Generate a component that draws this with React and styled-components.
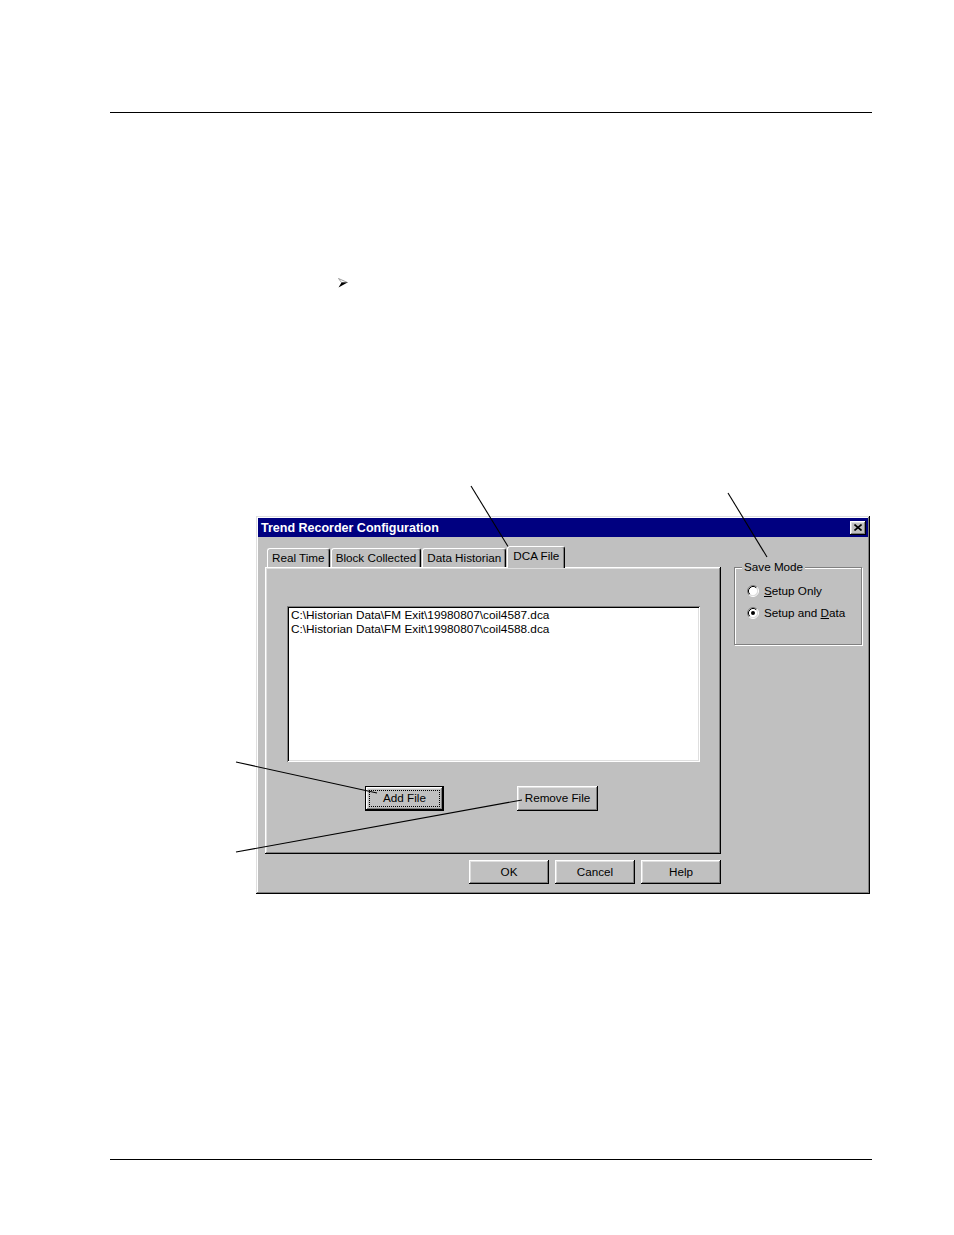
import React from 'react'
import styled, { createGlobalStyle, css } from 'styled-components'

const GlobalStyle = createGlobalStyle`
  html, body {
    margin: 0;
    padding: 0;
    background: #fff;
  }
  body {
    font-family: "Liberation Sans", Arial, sans-serif;
  }
`

const raised = css`
  box-shadow: inset -1px -1px #000, inset 1px 1px #fff, inset -2px -2px #808080,
    inset 2px 2px #dfdfdf;
`

const sunken = css`
  box-shadow: inset 1px 1px #808080, inset -1px -1px #fff, inset 2px 2px #000,
    inset -2px -2px #dfdfdf;
`

const Page = styled.div`
  position: relative;
  width: 954px;
  height: 1235px;
  overflow: hidden;
  background: #fff;
`

const Rule = styled.hr`
  margin: ${({ $top }) => $top}px 0 0 110px;
  width: 762px;
  height: 1px;
  border: 0;
  background: #000;
`

const Bullet = styled.svg`
  display: block;
  margin: 165px 0 0 338px;
`

const Window = styled.div`
  width: 614px;
  box-sizing: border-box;
  margin: 228px 0 0 256px;
  padding: 2px;
  background: #c0c0c0;
  color: #000;
  font-size: 11.7px;
  box-shadow: inset -1px -1px #000, inset 1px 1px #dfdfdf, inset -2px -2px #808080,
    inset 2px 2px #fff;
`

const TitleBar = styled.div`
  height: 19px;
  display: flex;
  align-items: center;
  justify-content: space-between;
  padding: 0 2px 0 3px;
  background: #000080;
  color: #fff;
  font-size: 12.5px;
  font-weight: bold;
`

const CloseButton = styled.button`
  width: 16px;
  height: 14px;
  padding: 0;
  border: 0;
  display: grid;
  place-items: center;
  background: #c0c0c0;
  ${raised}
`

const Body = styled.div`
  display: flex;
  gap: 13px;
  padding: 9px 0 8px 7px;
`

const LeftColumn = styled.div`
  width: 456px;
  display: flex;
  flex-direction: column;
`

const TabRow = styled.div`
  height: 21px;
  display: flex;
  align-items: flex-end;
  gap: 1px;
  padding-left: 2px;
`

const Tab = styled.div`
  position: relative;
  box-sizing: border-box;
  height: ${({ $active }) => ($active ? 22 : 19)}px;
  margin-bottom: ${({ $active }) => ($active ? -1 : 0)}px;
  z-index: ${({ $active }) => ($active ? 1 : 0)};
  display: flex;
  align-items: center;
  padding: 0 ${({ $active }) => ($active ? 5 : 4)}px
    ${({ $active }) => ($active ? 4 : 1)}px;
  background: #c0c0c0;
  border-top: 1px solid #fff;
  border-left: 1px solid #fff;
  border-right: 1px solid #000;
  border-radius: 3px 3px 0 0;
  box-shadow: inset -1px 0 #808080;
  white-space: nowrap;
`

const Panel = styled.div`
  height: 287px;
  box-sizing: border-box;
  display: flex;
  flex-direction: column;
  padding: 39px 0 0 22px;
  ${raised}
`

const FileList = styled.div`
  width: 413px;
  height: 156px;
  box-sizing: border-box;
  padding: 2px 4px;
  background: #fff;
  font-size: 11.8px;
  ${sunken}
`

const FileItem = styled.div`
  line-height: 14px;
  white-space: nowrap;
`

const PanelButtons = styled.div`
  display: flex;
  gap: 73px;
  margin-top: 24px;
  padding-left: 78px;
`

const Button = styled.button`
  width: ${({ $w }) => $w}px;
  height: ${({ $h }) => $h}px;
  box-sizing: border-box;
  display: flex;
  align-items: stretch;
  padding: ${({ $default }) => ($default ? '3px' : '0')};
  border: ${({ $default }) => ($default ? '1px solid #000' : '0')};
  background: #c0c0c0;
  color: #000;
  font-family: inherit;
  font-size: 11.7px;
  ${raised}
`

const Label = styled.span`
  flex: 1;
  display: flex;
  align-items: center;
  justify-content: center;
  padding-bottom: ${({ $lift }) => $lift || 1}px;
  border: 1px dotted ${({ $focus }) => ($focus ? '#000' : 'transparent')};
`

const Footer = styled.div`
  display: flex;
  justify-content: flex-end;
  gap: 6px;
  margin-top: 6px;
`

const GroupBox = styled.fieldset`
  width: 128px;
  height: 85px;
  box-sizing: border-box;
  margin: 14px 0 0 0;
  padding: 0;
  min-inline-size: 0;
  border: 1px solid #808080;
  box-shadow: inset 1px 1px #fff, 1px 1px #fff;
`

const Legend = styled.legend`
  margin-left: 7px;
  padding: 0 2px;
  line-height: 14px;
  background: #c0c0c0;
`

const RadioList = styled.div`
  display: flex;
  flex-direction: column;
  gap: 6px;
  padding: 9px 0 0 12px;
`

const RadioRow = styled.label`
  height: 16px;
  display: flex;
  align-items: center;
  gap: 5px;
  white-space: nowrap;

  span {
    padding-bottom: 2px;
  }
`

const Leaders = styled.svg`
  position: absolute;
  top: 0;
  left: 0;
  pointer-events: none;
`

const Radio = ({ checked }) => (
  <svg width="12" height="12" viewBox="0 0 12 12">
    <circle cx="6" cy="6" r="4.5" fill="#fff" />
    <path d="M9.89 2.11 A5.5 5.5 0 0 0 2.11 9.89" fill="none" stroke="#808080" />
    <path d="M9.89 2.11 A5.5 5.5 0 0 1 2.11 9.89" fill="none" stroke="#fff" />
    <path d="M9.18 2.82 A4.5 4.5 0 0 0 2.82 9.18" fill="none" stroke="#000" />
    <path d="M9.18 2.82 A4.5 4.5 0 0 1 2.82 9.18" fill="none" stroke="#dfdfdf" />
    {checked && <circle cx="6" cy="6" r="2" fill="#000" />}
  </svg>
)

const tabs = ['Real Time', 'Block Collected', 'Data Historian', 'DCA File']
const files = [
  'C:\\Historian Data\\FM Exit\\19980807\\coil4587.dca',
  'C:\\Historian Data\\FM Exit\\19980807\\coil4588.dca',
]
const leaders = [
  [471, 486, 512, 553],
  [728, 493, 767, 557],
  [236, 762, 377, 793],
  [236, 852, 522, 800],
]

const App = () => {
  return (
    <Page>
      <GlobalStyle />
      <Rule $top={112} />
      <Bullet width="10" height="10" viewBox="0 0 10 10">
        <polygon points="0.5,0.5 9.5,4.5 3.5,4.5" fill="#fff" stroke="#888" strokeWidth="0.8" />
        <polygon points="3.5,4.5 9.5,4.5 0.5,9.5" fill="#000" />
      </Bullet>

      <Window>
        <TitleBar>
          <span>Trend Recorder Configuration</span>
          <CloseButton aria-label="Close">
            <svg width="8" height="7" viewBox="0 0 8 7">
              <path d="M0.5 0.5 L7.5 6.5 M7.5 0.5 L0.5 6.5" stroke="#000" strokeWidth="1.6" />
            </svg>
          </CloseButton>
        </TitleBar>
        <Body>
          <LeftColumn>
            <TabRow>
              {tabs.map((t) => (
                <Tab key={t} $active={t === 'DCA File'}>
                  {t}
                </Tab>
              ))}
            </TabRow>
            <Panel>
              <FileList>
                {files.map((f) => (
                  <FileItem key={f}>{f}</FileItem>
                ))}
              </FileList>
              <PanelButtons>
                <Button $w={79} $h={25} $default>
                  <Label $focus $lift={2}>Add File</Label>
                </Button>
                <Button $w={81} $h={25}>
                  <Label $lift={2}>Remove File</Label>
                </Button>
              </PanelButtons>
            </Panel>
            <Footer>
              <Button $w={80} $h={24}>
                <Label>OK</Label>
              </Button>
              <Button $w={80} $h={24}>
                <Label>Cancel</Label>
              </Button>
              <Button $w={80} $h={24}>
                <Label>Help</Label>
              </Button>
            </Footer>
          </LeftColumn>
          <div>
            <GroupBox>
              <Legend>Save Mode</Legend>
              <RadioList>
                <RadioRow>
                  <Radio />
                  <span>
                    <u>S</u>etup Only
                  </span>
                </RadioRow>
                <RadioRow>
                  <Radio checked />
                  <span>
                    Setup and <u>D</u>ata
                  </span>
                </RadioRow>
              </RadioList>
            </GroupBox>
          </div>
        </Body>
      </Window>

      <Rule $top={265} />

      <Leaders width="954" height="1235" viewBox="0 0 954 1235">
        {leaders.map(([x1, y1, x2, y2], i) => (
          <line key={i} x1={x1} y1={y1} x2={x2} y2={y2} stroke="#000" strokeWidth="1.1" />
        ))}
      </Leaders>
    </Page>
  )
}

export default App
